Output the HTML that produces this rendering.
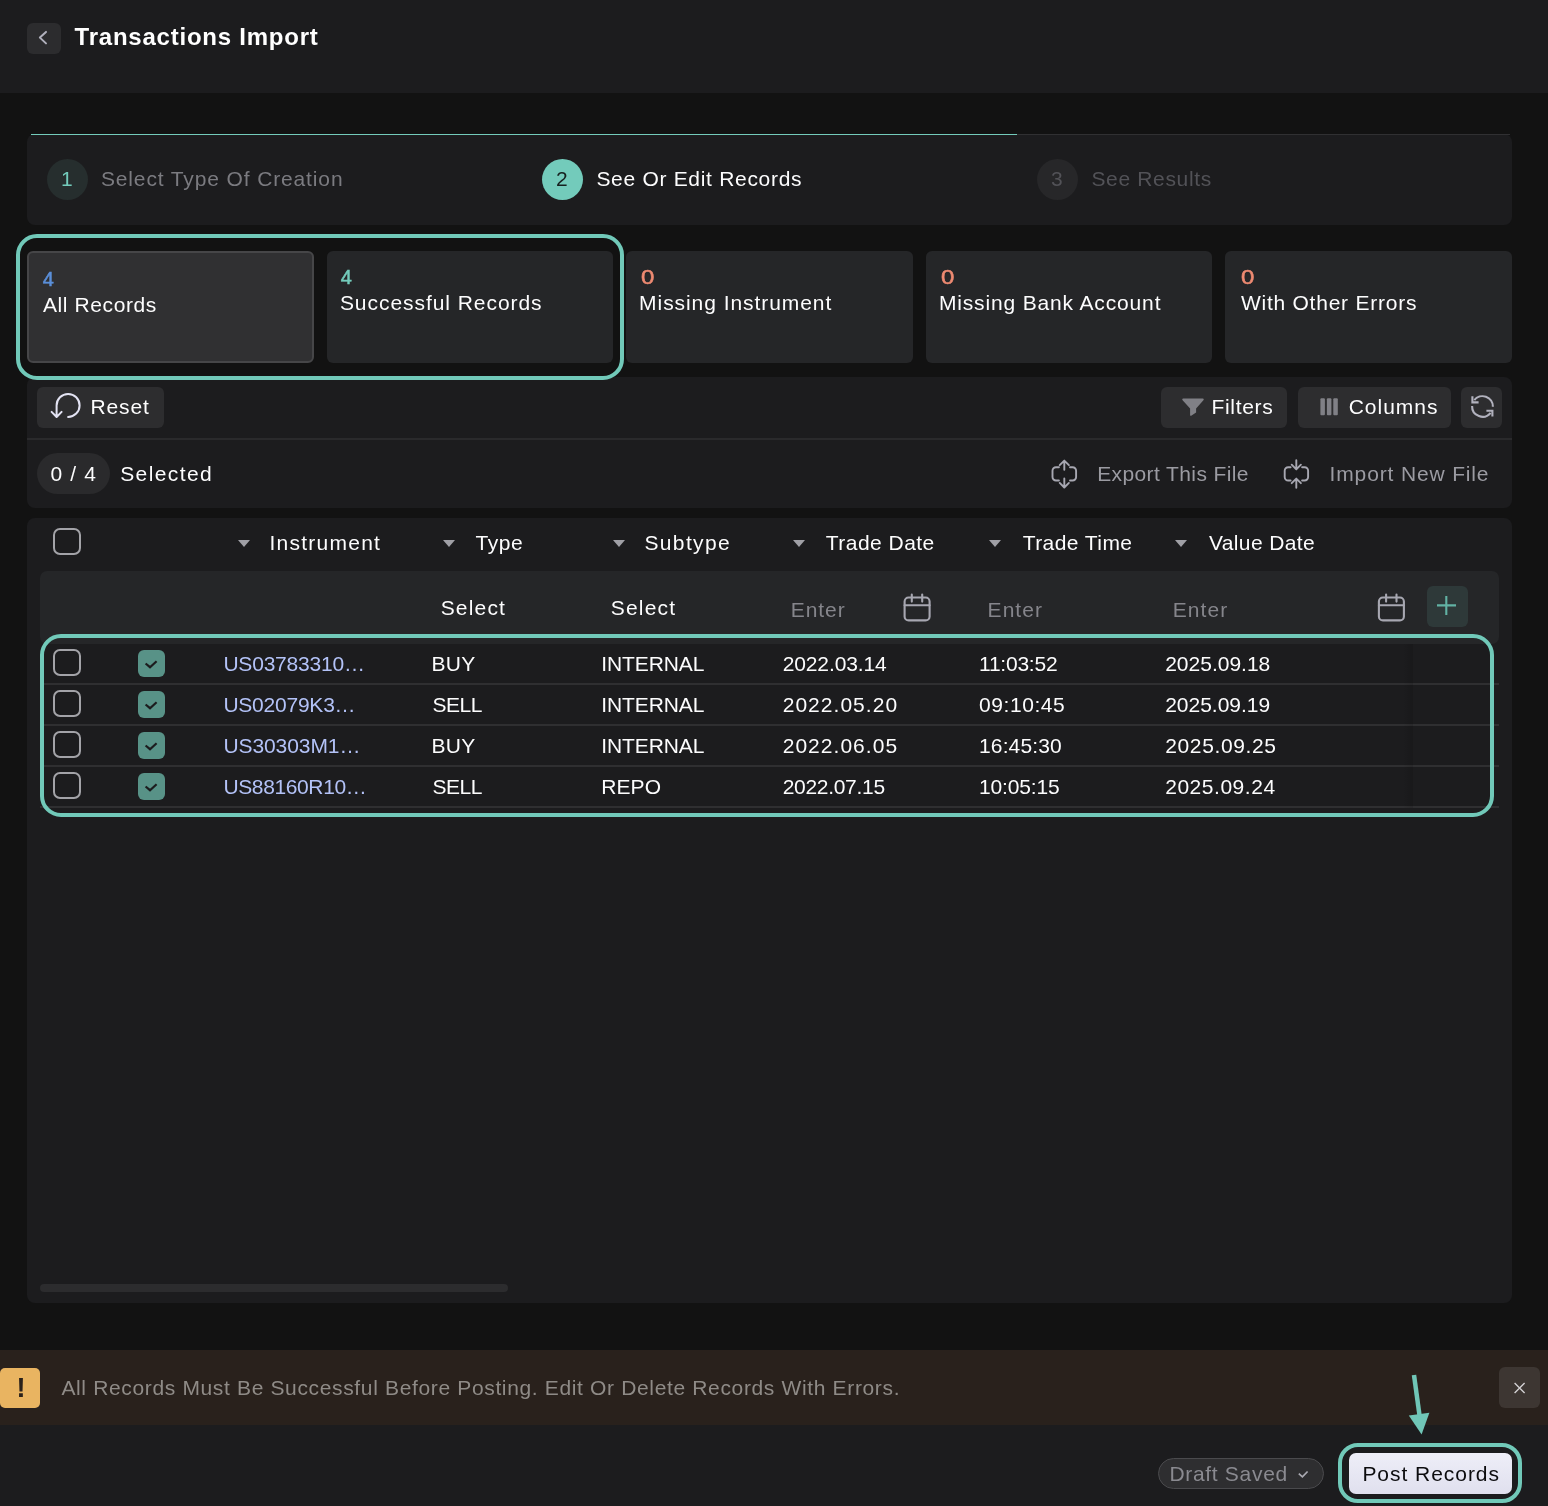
<!DOCTYPE html>
<html lang="en"><head><meta charset="utf-8"><title>Transactions Import</title>
<style>
*{box-sizing:border-box;margin:0;padding:0}
html,body{width:1548px;height:1506px;overflow:hidden;background:#121212;font-family:"Liberation Sans",sans-serif}
.b{position:absolute}
.t{position:absolute;white-space:pre;line-height:1}
svg{position:absolute;overflow:visible}
.hl{position:absolute;border:4px solid #71c9b9;border-radius:21px}
.btn{position:absolute;background:#2d2d2f;border-radius:6px}
.card{position:absolute;top:251px;width:286.6px;height:112px;background:#252628;border-radius:6px}
.cb{position:absolute;width:28px;height:27px;border:2px solid #a3a3a8;border-radius:7px;left:53px}
.gc{position:absolute;width:27px;height:27px;background:#589287;border-radius:6px;left:138px}
.sep{position:absolute;left:40px;width:1459px;height:2px;background:#2f2f31}
.caret{position:absolute;width:0;height:0;border-left:6px solid transparent;border-right:6px solid transparent;border-top:7px solid #a0a0a6;top:540px}
</style></head><body>
<!-- header -->
<div class="b" style="left:0;top:0;width:1548px;height:93px;background:#1c1c1e"></div>
<div class="btn" style="left:27px;top:23px;width:34px;height:31px;background:#2c2c2e"></div>
<svg style="left:27px;top:23px" width="34" height="31" viewBox="0 0 34 31"><path d="M19 8.9 L12.9 14.6 L19 20.4" fill="none" stroke="#b0b0bc" stroke-width="2" stroke-linecap="round" stroke-linejoin="round"/></svg>

<!-- stepper -->
<div class="b" style="left:27px;top:134px;width:1485px;height:91px;background:#1c1c1e;border-radius:8px"></div>
<div class="b" style="left:31px;top:133.5px;width:1479px;height:1.5px;background:#303032"></div>
<div class="b" style="left:31px;top:133.5px;width:986px;height:1.5px;background:#73cbbb"></div>
<div class="b" style="left:47px;top:159px;width:41px;height:41px;border-radius:50%;background:#262e2e"></div>
<div class="b" style="left:542px;top:159px;width:41px;height:41px;border-radius:50%;background:#73cbbb"></div>
<div class="b" style="left:1037px;top:159px;width:41px;height:41px;border-radius:50%;background:#272729"></div>

<!-- cards -->
<div class="card" style="left:27px;background:#303032;border:2px solid #464648"></div>
<div class="card" style="left:326.6px"></div>
<div class="card" style="left:626.2px"></div>
<div class="card" style="left:925.8px"></div>
<div class="card" style="left:1225.4px"></div>

<!-- toolbar panel -->
<div class="b" style="left:27px;top:377px;width:1485px;height:131px;background:#1c1c1e;border-radius:8px"></div>
<div class="b" style="left:27px;top:438px;width:1485px;height:2px;background:#2a2a2c"></div>
<div class="hl" style="left:16px;top:234px;width:608px;height:146px"></div>

<div class="btn" style="left:37px;top:387px;width:127px;height:41px"></div>
<div class="btn" style="left:1161px;top:387px;width:126px;height:41px"></div>
<div class="btn" style="left:1298px;top:387px;width:153px;height:41px"></div>
<div class="btn" style="left:1461px;top:387px;width:41px;height:41px"></div>
<div class="b" style="left:37px;top:453px;width:73px;height:41px;border-radius:21px;background:#2a2a2c"></div>

<!-- table panel -->
<div class="b" style="left:27px;top:518px;width:1485px;height:785px;background:#1c1c1e;border-radius:8px"></div>
<div class="b" style="left:40px;top:571px;width:1459px;height:73px;background:#252628;border-radius:7px 7px 7px 7px"></div>
<div class="cb" style="top:528px"></div>
<div class="caret" style="left:238px"></div>
<div class="caret" style="left:442.5px"></div>
<div class="caret" style="left:612.5px"></div>
<div class="caret" style="left:792.5px"></div>
<div class="caret" style="left:988.5px"></div>
<div class="caret" style="left:1175px"></div>
<div class="btn" style="left:1427px;top:586px;width:41px;height:41px;background:#2e3939"></div>
<svg style="left:1427px;top:586px" width="41" height="41" viewBox="0 0 41 41"><path d="M19.3 10 V29 M10 19.4 H29" stroke="#62b2a4" stroke-width="2.1" fill="none"/></svg>
<div class="cb" style="top:649px"></div><div class="gc" style="top:650px"></div><svg style="left:138px;top:650px" width="27" height="27" viewBox="0 0 27 27"><path d="M7.6 13.5 L12 17.2 L18.6 11.2" stroke="#1c1c1e" stroke-width="2.2" fill="none"/></svg><div class="sep" style="top:682.5px"></div>
<div class="cb" style="top:690px"></div><div class="gc" style="top:691px"></div><svg style="left:138px;top:691px" width="27" height="27" viewBox="0 0 27 27"><path d="M7.6 13.5 L12 17.2 L18.6 11.2" stroke="#1c1c1e" stroke-width="2.2" fill="none"/></svg><div class="sep" style="top:723.5px"></div>
<div class="cb" style="top:731px"></div><div class="gc" style="top:732px"></div><svg style="left:138px;top:732px" width="27" height="27" viewBox="0 0 27 27"><path d="M7.6 13.5 L12 17.2 L18.6 11.2" stroke="#1c1c1e" stroke-width="2.2" fill="none"/></svg><div class="sep" style="top:764.5px"></div>
<div class="cb" style="top:772px"></div><div class="gc" style="top:773px"></div><svg style="left:138px;top:773px" width="27" height="27" viewBox="0 0 27 27"><path d="M7.6 13.5 L12 17.2 L18.6 11.2" stroke="#1c1c1e" stroke-width="2.2" fill="none"/></svg><div class="sep" style="top:805.5px"></div>
<svg style="left:0;top:0" width="1548" height="700" viewBox="0 0 1548 700" fill="none" stroke-linecap="round" stroke-linejoin="round">
<!-- reset -->
<path d="M68.1 416.9 A11.5 11.5 0 1 0 56.6 405.4 V416.8 M51.6 411.9 L56.6 417 L61.6 411.9" stroke="#e3e3f3" stroke-width="2"/>
<!-- filter -->
<path d="M1183.2 398.4 H1202.8 Q1204.6 398.6 1203.4 400.2 L1196.1 408.4 V412.4 L1191.2 415.7 Q1190.1 416.2 1190.1 415 V408.4 L1182.6 400.2 Q1181.4 398.6 1183.2 398.4 Z" fill="#808086" stroke="none"/>
<!-- columns -->
<rect x="1320.4" y="398.3" width="4.5" height="17" rx="1" fill="#808086"/>
<rect x="1326.9" y="398.3" width="4.5" height="17" rx="1" fill="#808086"/>
<rect x="1333.3" y="398.3" width="4.5" height="17" rx="1" fill="#808086"/>
<!-- refresh -->
<g stroke="#b2b2be" stroke-width="2.1" stroke-linecap="butt" stroke-linejoin="miter">
<path d="M1474.3 400.2 A10.4 10.4 0 0 1 1492.9 406.8"/><path d="M1472.4 396.2 V402.4 H1478.6"/>
<path d="M1472.1 406 A10.4 10.4 0 0 0 1490.6 412.8"/><path d="M1492.4 416.6 V410.8 H1486.4"/>
</g>
<!-- export -->
<g stroke="#a7a7b1" stroke-width="1.9">
<path d="M1058.9 467.2 H1056 A3.5 3.5 0 0 0 1052.5 470.7 V477 A3.5 3.5 0 0 0 1056 480.5 H1058.9 M1070 467.2 H1072.6 A3.5 3.5 0 0 1 1076.1 470.7 V477 A3.5 3.5 0 0 1 1072.6 480.5 H1070 M1064.3 469.7 V460.8 M1059.7 465.2 L1064.3 460.6 L1068.9 465.2 M1064.3 478.4 V487.3 M1059.7 482.9 L1064.3 487.5 L1068.9 482.9"/>
<!-- import -->
<path d="M1290.6 467.2 H1288.2 A3.5 3.5 0 0 0 1284.7 470.7 V477 A3.5 3.5 0 0 0 1288.2 480.5 H1290.6 M1302.1 467.2 H1304.6 A3.5 3.5 0 0 1 1308.1 470.7 V477 A3.5 3.5 0 0 1 1304.6 480.5 H1302.1 M1296.3 460.2 V469.2 M1291.7 464.7 L1296.3 469.4 L1300.9 464.7 M1296.3 487.8 V478.8 M1291.7 483.2 L1296.3 478.6 L1300.9 483.2"/>
</g>
<!-- calendars -->
<g stroke="#a7a7b1" stroke-width="2.1">
<rect x="1378.9" y="597.5" width="25" height="22.9" rx="4"/><path d="M1378.9 605.3 H1403.9 M1386.1 594.6 V601.6 M1396.5 594.6 V601.6"/>
<rect x="904.6" y="597.5" width="25" height="22.9" rx="4"/><path d="M904.6 605.3 H929.6 M911.8 594.6 V601.6 M922.2 594.6 V601.6"/>
</g>
</svg>

<div class="b" style="left:1403px;top:644px;width:10px;height:164px;background:linear-gradient(90deg,rgba(0,0,0,0),rgba(0,0,0,.13))"></div>
<div class="hl" style="left:40px;top:634px;width:1454px;height:183px"></div>
<div class="b" style="left:40px;top:1284px;width:468px;height:8px;border-radius:4px;background:#2c2c2e"></div>

<!-- warning -->
<div class="b" style="left:0;top:1350px;width:1548px;height:75px;background:#29211c"></div>
<div class="b" style="left:0;top:1368px;width:40px;height:40px;background:#e9b461;border-radius:5px"></div>
<div class="b" style="left:1499px;top:1367px;width:41px;height:41px;background:#3d3632;border-radius:6px"></div>
<svg style="left:1499px;top:1367px" width="41" height="41" viewBox="0 0 41 41"><path d="M15.6 16 L25.6 26 M25.6 16 L15.6 26" stroke="#d2d0d2" stroke-width="1.4" fill="none"/></svg>

<!-- footer -->
<div class="b" style="left:0;top:1425px;width:1548px;height:81px;background:#1c1c1e"></div>
<div class="b" style="left:1158px;top:1458px;width:166px;height:31px;border-radius:16px;background:#2e2e30;border:1.5px solid #4a4a4d"></div>
<svg style="left:1297px;top:1468px" width="12" height="12" viewBox="0 0 12 12"><path d="M1.8 5.6 L5.4 8.9 L10.6 3.5" stroke="#aaaab2" stroke-width="1.7" fill="none"/></svg>
<div class="hl" style="left:1338px;top:1443px;width:184px;height:60px;border-radius:20px"></div>
<div class="b" style="left:1349px;top:1453px;width:163px;height:41px;border-radius:7px;background:linear-gradient(#eeeef8,#e0e0ee)"></div>
<svg style="left:0;top:0" width="1548" height="1506" viewBox="0 0 1548 1506"><path d="M1414 1375 L1419.6 1416" stroke="#70c6b7" stroke-width="4.5" fill="none"/><path d="M1408.8 1415.6 L1429.4 1412.8 L1421.6 1434.4 Z" fill="#70c6b7"/></svg>
<div style="position:absolute;left:0;top:0;width:1548px;height:1506px;will-change:transform"><span class="t" style="left:74.6px;top:24.7px;font-size:24px;color:#ffffff;font-weight:700;letter-spacing:0.77px">Transactions Import</span>
<span class="t" style="left:100.9px;top:168.2px;font-size:21px;color:#7b7b80;font-weight:400;letter-spacing:0.87px">Select Type Of Creation</span>
<span class="t" style="left:596.4px;top:168.2px;font-size:21px;color:#fdfdfe;font-weight:400;letter-spacing:0.70px">See Or Edit Records</span>
<span class="t" style="left:1091.4px;top:168.2px;font-size:21px;color:#525257;font-weight:400;letter-spacing:0.66px">See Results</span>
<span class="t" style="left:61.0px;top:168.2px;font-size:21px;color:#73cbbb;font-weight:400;letter-spacing:0.00px">1</span>
<span class="t" style="left:556.0px;top:168.2px;font-size:21px;color:#16201e;font-weight:400;letter-spacing:0.00px">2</span>
<span class="t" style="left:1051.0px;top:168.2px;font-size:21px;color:#525257;font-weight:400;letter-spacing:0.00px">3</span>
<span class="t" style="left:42.8px;top:269.1px;font-size:20px;color:#5b8fd9;font-weight:400;letter-spacing:0.00px;-webkit-text-stroke:0.5px #5b8fd9">4</span>
<span class="t" style="left:43.0px;top:294.2px;font-size:21px;color:#fdfdfe;font-weight:400;letter-spacing:0.60px">All Records</span>
<span class="t" style="left:340.8px;top:267.1px;font-size:20px;color:#73cbbb;font-weight:400;letter-spacing:0.00px;-webkit-text-stroke:0.5px #73cbbb">4</span>
<span class="t" style="left:339.9px;top:292.2px;font-size:21px;color:#fdfdfe;font-weight:400;letter-spacing:0.95px">Successful Records</span>
<span class="t" style="left:641.6px;top:267.1px;font-size:20px;color:#ee8a72;font-weight:400;letter-spacing:0.00px;-webkit-text-stroke:0.5px #ee8a72;transform:scaleX(1.2);transform-origin:50% 50%">0</span>
<span class="t" style="left:639.1px;top:292.2px;font-size:21px;color:#fdfdfe;font-weight:400;letter-spacing:0.94px">Missing Instrument</span>
<span class="t" style="left:941.5px;top:267.1px;font-size:20px;color:#ee8a72;font-weight:400;letter-spacing:0.00px;-webkit-text-stroke:0.5px #ee8a72;transform:scaleX(1.2);transform-origin:50% 50%">0</span>
<span class="t" style="left:938.9px;top:292.2px;font-size:21px;color:#fdfdfe;font-weight:400;letter-spacing:0.85px">Missing Bank Account</span>
<span class="t" style="left:1241.5px;top:267.1px;font-size:20px;color:#ee8a72;font-weight:400;letter-spacing:0.00px;-webkit-text-stroke:0.5px #ee8a72;transform:scaleX(1.2);transform-origin:50% 50%">0</span>
<span class="t" style="left:1240.9px;top:292.2px;font-size:21px;color:#fdfdfe;font-weight:400;letter-spacing:0.76px">With Other Errors</span>
<span class="t" style="left:90.4px;top:396.2px;font-size:21px;color:#fdfdfe;font-weight:400;letter-spacing:0.90px">Reset</span>
<span class="t" style="left:1211.4px;top:396.2px;font-size:21px;color:#fdfdfe;font-weight:400;letter-spacing:0.70px">Filters</span>
<span class="t" style="left:1348.7px;top:396.2px;font-size:21px;color:#fdfdfe;font-weight:400;letter-spacing:0.98px">Columns</span>
<span class="t" style="left:50.4px;top:463.2px;font-size:21px;color:#fdfdfe;font-weight:400;letter-spacing:1.15px">0 / 4</span>
<span class="t" style="left:120.2px;top:463.2px;font-size:21px;color:#fdfdfe;font-weight:400;letter-spacing:1.40px">Selected</span>
<span class="t" style="left:1097.2px;top:463.2px;font-size:21px;color:#9b9ba2;font-weight:400;letter-spacing:0.39px">Export This File</span>
<span class="t" style="left:1329.6px;top:463.2px;font-size:21px;color:#9b9ba2;font-weight:400;letter-spacing:0.85px">Import New File</span>
<span class="t" style="left:269.4px;top:532.2px;font-size:21px;color:#fdfdfe;font-weight:400;letter-spacing:1.26px">Instrument</span>
<span class="t" style="left:475.4px;top:532.2px;font-size:21px;color:#fdfdfe;font-weight:400;letter-spacing:0.60px">Type</span>
<span class="t" style="left:644.4px;top:532.2px;font-size:21px;color:#fdfdfe;font-weight:400;letter-spacing:1.38px">Subtype</span>
<span class="t" style="left:825.8px;top:532.2px;font-size:21px;color:#fdfdfe;font-weight:400;letter-spacing:0.47px">Trade Date</span>
<span class="t" style="left:1022.7px;top:532.2px;font-size:21px;color:#fdfdfe;font-weight:400;letter-spacing:0.43px">Trade Time</span>
<span class="t" style="left:1208.9px;top:532.2px;font-size:21px;color:#fdfdfe;font-weight:400;letter-spacing:0.39px">Value Date</span>
<span class="t" style="left:440.7px;top:597.2px;font-size:21px;color:#fdfdfe;font-weight:400;letter-spacing:1.18px">Select</span>
<span class="t" style="left:610.8px;top:597.2px;font-size:21px;color:#fdfdfe;font-weight:400;letter-spacing:1.18px">Select</span>
<span class="t" style="left:790.7px;top:599.2px;font-size:21px;color:#85858b;font-weight:400;letter-spacing:0.95px">Enter</span>
<span class="t" style="left:987.6px;top:599.2px;font-size:21px;color:#85858b;font-weight:400;letter-spacing:1.03px">Enter</span>
<span class="t" style="left:1172.8px;top:599.2px;font-size:21px;color:#85858b;font-weight:400;letter-spacing:1.05px">Enter</span>
<span class="t" style="left:61.4px;top:1377.2px;font-size:21px;color:#8f8b87;font-weight:400;letter-spacing:0.65px">All Records Must Be Successful Before Posting. Edit Or Delete Records With Errors.</span>
<span class="t" style="left:16.5px;top:1375.1px;font-size:27px;color:#2a211a;font-weight:700;letter-spacing:0.00px">!</span>
<span class="t" style="left:1169.4px;top:1463.2px;font-size:21px;color:#8a8a90;font-weight:400;letter-spacing:0.69px">Draft Saved</span>
<span class="t" style="left:1362.4px;top:1463.2px;font-size:21px;color:#0c0c0e;font-weight:400;letter-spacing:0.96px">Post Records</span>
<span class="t" style="left:223.4px;top:653.2px;font-size:21px;color:#b3c2f7;font-weight:400;letter-spacing:-0.20px">US03783310…</span>
<span class="t" style="left:431.4px;top:653.2px;font-size:21px;color:#fdfdfe;font-weight:400;letter-spacing:0.30px">BUY</span>
<span class="t" style="left:601.2px;top:653.2px;font-size:21px;color:#fdfdfe;font-weight:400;letter-spacing:-0.09px">INTERNAL</span>
<span class="t" style="left:782.7px;top:653.2px;font-size:21px;color:#fdfdfe;font-weight:400;letter-spacing:-0.12px">2022.03.14</span>
<span class="t" style="left:979.0px;top:653.2px;font-size:21px;color:#fdfdfe;font-weight:400;letter-spacing:-0.23px">11:03:52</span>
<span class="t" style="left:1165.2px;top:653.2px;font-size:21px;color:#fdfdfe;font-weight:400;letter-spacing:0.00px">2025.09.18</span>
<span class="t" style="left:223.4px;top:694.2px;font-size:21px;color:#b3c2f7;font-weight:400;letter-spacing:-0.23px">US02079K3…</span>
<span class="t" style="left:432.4px;top:694.2px;font-size:21px;color:#fdfdfe;font-weight:400;letter-spacing:-0.47px">SELL</span>
<span class="t" style="left:601.2px;top:694.2px;font-size:21px;color:#fdfdfe;font-weight:400;letter-spacing:-0.09px">INTERNAL</span>
<span class="t" style="left:782.7px;top:694.2px;font-size:21px;color:#fdfdfe;font-weight:400;letter-spacing:1.03px">2022.05.20</span>
<span class="t" style="left:979.0px;top:694.2px;font-size:21px;color:#fdfdfe;font-weight:400;letter-spacing:0.57px">09:10:45</span>
<span class="t" style="left:1165.2px;top:694.2px;font-size:21px;color:#fdfdfe;font-weight:400;letter-spacing:-0.02px">2025.09.19</span>
<span class="t" style="left:223.4px;top:735.2px;font-size:21px;color:#b3c2f7;font-weight:400;letter-spacing:-0.08px">US30303M1…</span>
<span class="t" style="left:431.4px;top:735.2px;font-size:21px;color:#fdfdfe;font-weight:400;letter-spacing:0.30px">BUY</span>
<span class="t" style="left:601.2px;top:735.2px;font-size:21px;color:#fdfdfe;font-weight:400;letter-spacing:-0.09px">INTERNAL</span>
<span class="t" style="left:782.7px;top:735.2px;font-size:21px;color:#fdfdfe;font-weight:400;letter-spacing:1.03px">2022.06.05</span>
<span class="t" style="left:979.0px;top:735.2px;font-size:21px;color:#fdfdfe;font-weight:400;letter-spacing:0.14px">16:45:30</span>
<span class="t" style="left:1165.2px;top:735.2px;font-size:21px;color:#fdfdfe;font-weight:400;letter-spacing:0.64px">2025.09.25</span>
<span class="t" style="left:223.4px;top:776.2px;font-size:21px;color:#b3c2f7;font-weight:400;letter-spacing:-0.37px">US88160R10…</span>
<span class="t" style="left:432.4px;top:776.2px;font-size:21px;color:#fdfdfe;font-weight:400;letter-spacing:-0.47px">SELL</span>
<span class="t" style="left:601.2px;top:776.2px;font-size:21px;color:#fdfdfe;font-weight:400;letter-spacing:0.10px">REPO</span>
<span class="t" style="left:782.7px;top:776.2px;font-size:21px;color:#fdfdfe;font-weight:400;letter-spacing:-0.30px">2022.07.15</span>
<span class="t" style="left:979.0px;top:776.2px;font-size:21px;color:#fdfdfe;font-weight:400;letter-spacing:-0.14px">10:05:15</span>
<span class="t" style="left:1165.2px;top:776.2px;font-size:21px;color:#fdfdfe;font-weight:400;letter-spacing:0.53px">2025.09.24</span></div>
</body></html>
